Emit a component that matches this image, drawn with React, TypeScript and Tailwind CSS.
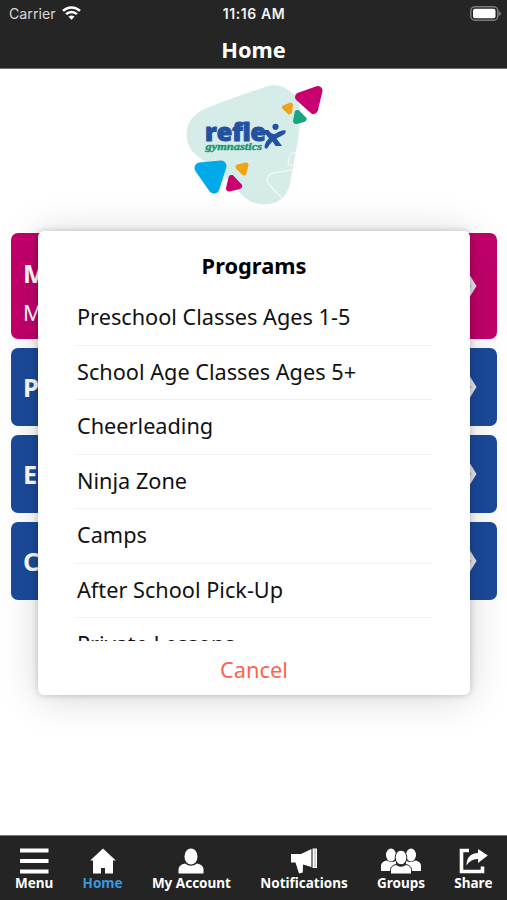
import React from 'react';

const programs = [
  'Preschool Classes Ages 1-5',
  'School Age Classes Ages 5+',
  'Cheerleading',
  'Ninja Zone',
  'Camps',
  'After School Pick-Up',
  'Private Lessons',
];

const cards = [
  { title: 'M', subtitle: 'M', className: 'h-[106px] bg-[#c2006b]' },
  { title: 'P', className: 'h-[78px] bg-[#1b4a9b]' },
  { title: 'E', className: 'h-[78px] bg-[#1b4a9b]' },
  { title: 'C', className: 'h-[78px] bg-[#1b4a9b]' },
];

const StatusBar = () => (
  <div className="flex h-7 items-center justify-between pl-[9px] pr-[6px] font-['Inter',sans-serif] text-[#f2f2f2]">
    <div className="flex w-[120px] items-center gap-[6px]">
      <span className="text-[14.2px] leading-none text-[#d8d8d8]">Carrier</span>
      <svg className="-mt-0.5" width="19" height="14" viewBox="0 0 19 14" fill="none" stroke="#fff" strokeWidth="2.6">
        <path d="M1 4.9C5.8 0.3 13.2 0.3 18 4.9" />
        <path d="M4.1 8.1C7.2 5.2 11.8 5.2 14.9 8.1" />
        <path d="M6.5 10.8Q9.5 8.2 12.5 10.8L9.5 13.8Z" fill="#fff" stroke="none" />
      </svg>
    </div>
    <span className="pr-[2px] text-[14px] font-semibold leading-none tracking-[0.6px]">11:16 AM</span>
    <div className="flex w-[120px] justify-end">
      <svg className="-mt-0.5" width="31" height="15" viewBox="0 0 31 15">
        <rect x="0.8" y="0.8" width="27" height="13.4" rx="4" fill="none" stroke="#7b7b7b" strokeWidth="1.5" />
        <rect x="3" y="2.7" width="22.5" height="9.6" rx="2" fill="#fff" />
        <path d="M28.7 5Q31 6 31 7.5Q31 9 28.7 10Z" fill="#7b7b7b" />
      </svg>
    </div>
  </div>
);

const Logo = () => (
  <svg width="140" height="124" viewBox="185 83 140 124" strokeLinejoin="round">
    <path
      d="M268 86C278 83 293 89 298 101C302 111 300 128 297 146L290 184C287 199 274 206 260 204C245 202 239 191 229 181L194 153C183 142 184 121 199 112C206 107 250 92 268 86Z"
      fill="#d5ece9"
    />
    <g fill="none" stroke="#f3faf9" strokeWidth="1.2">
      <path d="M292 170L273 173Q265 176 268 183Q275 191 282 198" />
      <path d="M296 152L291 154Q288 158 288 163Q289 166 294 165" />
    </g>
    <path d="M299.5 97L318 90.5L313.5 109.5Z" fill="#c9006f" stroke="#c9006f" strokeWidth="9" />
    <path d="M284.5 107.5L290.5 105L289.5 112Z" fill="#eda516" stroke="#eda516" strokeWidth="5" />
    <path d="M297.5 113L303.5 119L296 121Z" fill="#1ba481" stroke="#1ba481" strokeWidth="6" />
    <path d="M200 168L221 166L214 188Z" fill="#00a9e8" stroke="#00a9e8" strokeWidth="11" />
    <path d="M238 167L246 165L244 173Z" fill="#eda516" stroke="#eda516" strokeWidth="5" />
    <path d="M231.5 178L239 186L229 188.5Z" fill="#c9006f" stroke="#c9006f" strokeWidth="6" />
    <text x="205" y="140.5" textLength="61" lengthAdjust="spacingAndGlyphs" className="fill-[#2450a4] stroke-[#2450a4] stroke-[1.1] font-['Open_Sans',sans-serif] text-[25.5px] font-extrabold">
      refle
    </text>
    <text x="205.5" y="149.5" textLength="56.5" lengthAdjust="spacingAndGlyphs" className="fill-[#16976f] stroke-[#16976f] stroke-[0.4] font-['Liberation_Serif',serif] text-[10.5px] font-bold italic">
      gymnastics
    </text>
    {/* leaping figure used as the x */}
    <g fill="#2450a4">
      <circle cx="275.5" cy="126.8" r="3.1" />
      <path d="M262.5 130H268.5Q271 134.5 275 134Q282 129.5 285.5 130.5Q286.5 133 283 135Q279 137 276.5 138.5L282 146H275.5L272.5 141.5Q269.5 144 267.5 148Q265 150 264.5 146.5Q265.5 141 269 138.5Z" />
    </g>
  </svg>
);

const CardArrow = () => (
  <svg width="24" height="24" viewBox="0 0 24 24">
    <path d="M7 1.5H17L23.5 12L17 22.5H7L0.5 12Z" fill="#e9e9ef" />
    <path d="M11 5.5L17.2 12L11 18.5" fill="none" stroke="#777" strokeWidth="1.2" />
  </svg>
);

const ProgramsModal = () => (
  <div className="absolute left-[38px] top-[231px] flex h-[464px] w-[432px] flex-col rounded-[6px] bg-white text-black shadow-[0_0_7px_rgba(0,0,0,0.22),0_3px_42px_rgba(0,0,0,0.16)]">
    <h2 className="mt-[17px] h-[43px] text-center text-[21.8px] font-bold leading-9">Programs</h2>
    <ul className="mx-[38px] h-[350px] overflow-hidden text-[#111]">
      {programs.map((program) => (
        <li key={program} className="h-[54.5px] whitespace-nowrap border-b border-[#f0f0f0] pl-px text-[21.7px] leading-[52px]">
          {program}
        </li>
      ))}
    </ul>
    <button className="h-[54px] text-center text-[21.8px] leading-[58px] text-[#fb6450]">Cancel</button>
  </div>
);

const TabBar = () => (
  <nav className="flex h-[65px] justify-between border-t border-[#777] bg-[#242424] pl-[15px] pr-[14.5px] text-[13.5px] font-bold text-white">
    <div className="flex flex-col items-center">
      <svg className="mt-3" width="30" height="26" viewBox="0 0 30 26" fill="#fff">
        <path d="M1 0.5H29.5V4.5H1ZM1 11H29.5V15H1ZM1 21.5H29.5V25.5H1Z" />
      </svg>
      <span className="leading-[18px]">Menu</span>
    </div>
    <div className="flex flex-col items-center text-[#369bde]">
      <svg className="mt-3" width="26" height="26" viewBox="0 0 26 26" fill="#fff">
        <path d="M13 0.5L25.8 12.5H23V25.5H15V20H11V25.5H3V12.5H0.2Z" />
      </svg>
      <span className="leading-[18px]">Home</span>
    </div>
    <div className="flex flex-col items-center">
      <svg className="mt-3" width="26" height="26" viewBox="0 0 26 26" fill="#fff">
        <ellipse cx="13" cy="8.5" rx="6.5" ry="8" />
        <path d="M0.5 25.5V21Q1 16.5 7 15.5Q13 20 19 15.5Q25 16.5 25.5 21V25.5Z" />
      </svg>
      <span className="leading-[18px]">My Account</span>
    </div>
    <div className="flex flex-col items-center">
      <svg className="mt-3" width="28" height="26" viewBox="0 0 28 26" fill="#fff">
        <path d="M1 6H11L21.5 1V19L13 16.5L12.8 24.5L9 25.5L5.5 14.5H1ZM22.5 0.5H27V20H22.5Z" />
        <path d="M22 1V19.5M25 1V19.5" stroke="#777" strokeWidth="0.6" />
      </svg>
      <span className="leading-[18px]">Notifications</span>
    </div>
    <div className="flex flex-col items-center">
      <svg className="mt-3" width="40" height="26" viewBox="0 0 40 26" fill="#fff">
        <ellipse cx="10" cy="7" rx="5" ry="6.5" />
        <ellipse cx="30" cy="7" rx="5" ry="6.5" />
        <path d="M0 23V17Q1 13 6 12.5Q11 15.5 15 12.5V23ZM40 23V17Q39 13 34 12.5Q29 15.5 25 12.5V23Z" />
        <g stroke="#242424" strokeWidth="1">
          <path d="M9.5 26V21.5Q10 17.5 15 16.5Q20 20 25 16.5Q30 17.5 30.5 21.5V26Z" />
          <ellipse cx="20" cy="9.5" rx="5.8" ry="7.3" />
        </g>
      </svg>
      <span className="leading-[18px]">Groups</span>
    </div>
    <div className="flex flex-col items-center">
      <svg className="mt-3" width="30" height="26" viewBox="0 0 30 26">
        <path d="M11 2.5H3.5V23.5H24.5V18.5" fill="none" stroke="#fff" strokeWidth="3.6" />
        <path d="M20 1L29.8 7.5L20 15V11Q13 10.5 8.5 17.5Q8.5 5.5 20 5Z" fill="#fff" />
      </svg>
      <span className="leading-[18px]">Share</span>
    </div>
  </nav>
);

export default function App() {
  return (
    <div className="relative flex h-[900px] w-full flex-col overflow-hidden bg-white font-['Noto_Sans','Open_Sans',sans-serif]">
      <header className="h-[69px] border-b border-[#707070] bg-[#252525] text-white">
        <StatusBar />
        <h1 className="text-center text-[21.8px] font-bold leading-[44px]">Home</h1>
      </header>

      <main className="flex flex-1 flex-col">
        <div className="mt-[14px] flex h-[150.4px] justify-center pl-[3px]">
          <Logo />
        </div>
        <div className="flex flex-col gap-[8.8px] pl-[11px] pr-[10px]">
          {cards.map((card) => (
            <div key={card.title} className={`flex items-center justify-between rounded-[7px] pl-[12px] pr-5 text-white ${card.className}`}>
              <div className={card.subtitle ? 'pt-[13px]' : ''}>
                <div className="text-[25.5px] font-bold leading-[40px]">{card.title}</div>
                {card.subtitle && <div className="text-[21.8px] leading-[40px]">{card.subtitle}</div>}
              </div>
              <CardArrow />
            </div>
          ))}
        </div>
      </main>

      <ProgramsModal />
      <TabBar />
    </div>
  );
}
